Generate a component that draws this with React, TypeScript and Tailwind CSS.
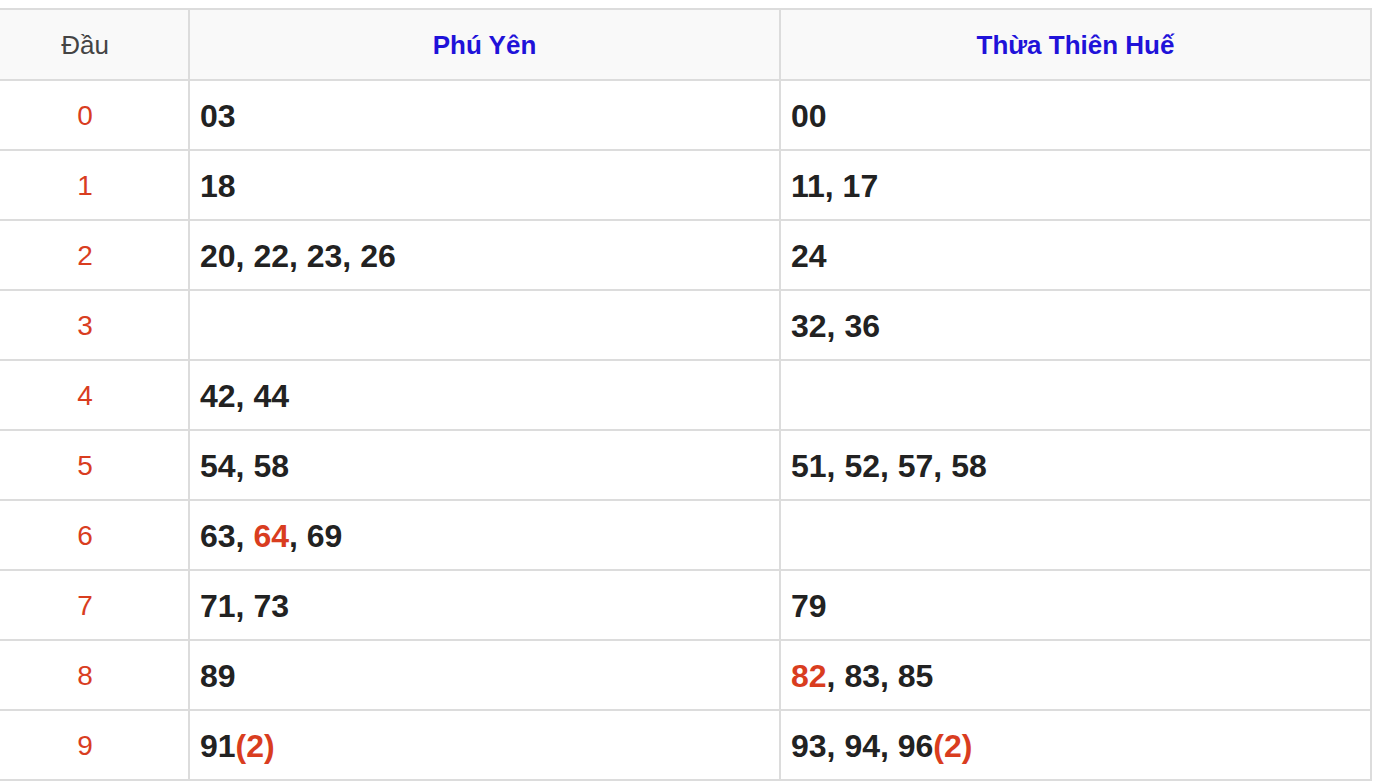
import React from 'react';

type Part = { text: string; hot?: boolean };

// Each cell is a list of number parts; hot parts are highlighted in red
const rows: { head: string; phuYen: Part[]; hue: Part[] }[] = [
  { head: '0', phuYen: [{ text: '03' }], hue: [{ text: '00' }] },
  { head: '1', phuYen: [{ text: '18' }], hue: [{ text: '11, 17' }] },
  { head: '2', phuYen: [{ text: '20, 22, 23, 26' }], hue: [{ text: '24' }] },
  { head: '3', phuYen: [], hue: [{ text: '32, 36' }] },
  { head: '4', phuYen: [{ text: '42, 44' }], hue: [] },
  { head: '5', phuYen: [{ text: '54, 58' }], hue: [{ text: '51, 52, 57, 58' }] },
  { head: '6', phuYen: [{ text: '63, ' }, { text: '64', hot: true }, { text: ', 69' }], hue: [] },
  { head: '7', phuYen: [{ text: '71, 73' }], hue: [{ text: '79' }] },
  { head: '8', phuYen: [{ text: '89' }], hue: [{ text: '82', hot: true }, { text: ', 83, 85' }] },
  { head: '9', phuYen: [{ text: '91' }, { text: '(2)', hot: true }], hue: [{ text: '93, 94, 96' }, { text: '(2)', hot: true }] },
];

function Numbers({ parts }: { parts: Part[] }) {
  return (
    <span className="whitespace-pre pt-[2px]">
      {parts.map((p, i) => (
        <span key={i} className={p.hot ? 'text-[#d93d1f]' : ''}>
          {p.text}
        </span>
      ))}
    </span>
  );
}

export default function App() {
  return (
    <div className="min-h-screen bg-white overflow-hidden pt-[8px] font-['Liberation_Sans',Arial,sans-serif]">
      <div className="ml-[-18px] w-[1390px] grid grid-cols-[208px_591px_591px] border-t-2 border-[#dcdcdc]">
        {/* Header */}
        <div className="h-[71px] flex items-center justify-center pt-[2px] bg-[#f9f9f9] border-b-2 border-r-2 border-[#dcdcdc] text-[26px] text-[#444]">
          Đầu
        </div>
        <div className="h-[71px] flex items-center justify-center pt-[2px] bg-[#f9f9f9] border-b-2 border-r-2 border-[#dcdcdc] text-[26px] font-bold text-[#1f12d9]">
          Phú Yên
        </div>
        <div className="h-[71px] flex items-center justify-center pt-[2px] bg-[#f9f9f9] border-b-2 border-r-2 border-[#dcdcdc] text-[26px] font-bold text-[#1f12d9]">
          Thừa Thiên Huế
        </div>

        {rows.map((r) => (
          <React.Fragment key={r.head}>
            <div className="h-[70px] flex items-center justify-center pt-[2px] border-b-2 border-r-2 border-[#dcdcdc] text-[28px] text-[#d93d1f]">
              {r.head}
            </div>
            <div className="h-[70px] flex items-center pl-[10px] border-b-2 border-r-2 border-[#dcdcdc] text-[32px] font-bold text-[#222]">
              <Numbers parts={r.phuYen} />
            </div>
            <div className="h-[70px] flex items-center pl-[10px] border-b-2 border-r-2 border-[#dcdcdc] text-[32px] font-bold text-[#222]">
              <Numbers parts={r.hue} />
            </div>
          </React.Fragment>
        ))}
      </div>
    </div>
  );
}
